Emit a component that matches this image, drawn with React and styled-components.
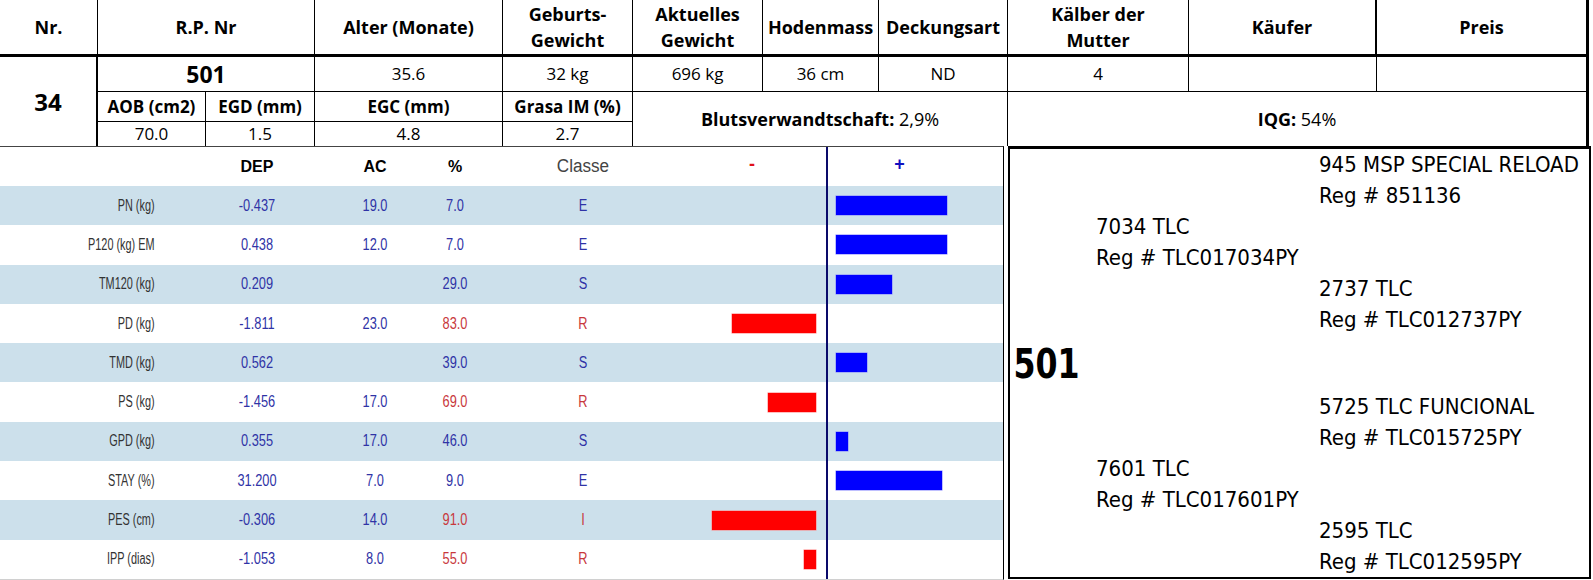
import React from "react"
import styled, { createGlobalStyle } from "styled-components"

const GlobalStyle = createGlobalStyle`
  html, body {
    margin: 0;
    padding: 0;
    background: #fff;
  }
  * {
    box-sizing: border-box;
  }
`

const Page = styled.div`
  width: 1593px;
  height: 580px;
  overflow: hidden;
  background: #fff;
`

// top summary table

const TopGrid = styled.div`
  display: grid;
  width: 1589px;
  grid-template-columns: 98px 108px 109px 188px 130px 130px 116px 129px 181px 188px 1fr;
  grid-template-rows: 57px 35px 30px 24px;
  border-right: 3px solid #000;
  font-family: "Open Sans", "Noto Sans", sans-serif;
  color: #000;
`

const Cell = styled.div`
  grid-column: ${({ $col }) => $col};
  grid-row: ${({ $row }) => $row};
  display: flex;
  flex-direction: column;
  align-items: center;
  justify-content: center;
  text-align: center;
  font-size: ${({ $size }) => $size || 17}px;
  font-weight: ${({ $bold }) => ($bold ? 700 : 400)};
  line-height: ${({ $lh }) => $lh || 26}px;
  border-right: ${({ $right }) => ($right === undefined ? 1 : $right)}px solid #000;
  border-bottom: ${({ $bottom }) => ($bottom === undefined ? 1 : $bottom)}px solid #000;
  overflow: hidden;
  white-space: nowrap;

  b {
    font-weight: 700;
  }
`

const HeadCell = styled(Cell).attrs({ $bold: true, $bottom: 3, $size: 18 })``

// bottom area

const Lower = styled.div`
  display: flex;
  height: 434px;
`

const Chart = styled.div`
  width: 1004px;
  border-top: 1px solid #444;
  border-right: 1px solid #000;
  border-bottom: 1px solid #d0d0d0;
  font-family: "Liberation Sans", Arial, sans-serif;
  position: relative;
`

const ChartRow = styled.div`
  display: grid;
  grid-template-columns: 160px 194px 42px 118px 138px 174px 2px 1fr;
  align-items: center;
  height: ${({ $head }) => ($head ? 39 : 39.3)}px;
  background: ${({ $shade }) => ($shade ? "#cce0eb" : "#fff")};
`

const Txt = styled.span`
  display: block;
  font-size: 16px;
  font-weight: 400;
  color: ${({ $tone }) =>
    $tone === "red" ? "#c8383c" : $tone === "blue" ? "#2f33a6" : "#333"};
  text-align: ${({ $align }) => $align || "center"};
  padding-right: ${({ $align }) => ($align === "right" ? 8 : 0)}px;
  transform: scaleX(${({ $align }) => ($align === "right" ? 0.68 : 0.8)});
  transform-origin: ${({ $align }) => ($align === "right" ? "right" : "center")} center;
  white-space: nowrap;
`

const HeadTxt = styled.span`
  display: block;
  text-align: center;
  font-size: ${({ $light }) => ($light ? 18 : 16)}px;
  font-weight: ${({ $light }) => ($light ? 400 : 700)};
  color: ${({ $light }) => ($light ? "#444" : "#000")};
  transform: scaleX(${({ $light }) => ($light ? 0.95 : 1)});
  white-space: nowrap;
`

const Sign = styled.span`
  display: block;
  text-align: center;
  font-family: "Liberation Sans", Arial, sans-serif;
  font-weight: 700;
  font-size: 18px;
  color: ${({ $plus }) => ($plus ? "#1010c0" : "#e0101a")};
  padding-left: ${({ $plus }) => ($plus ? 0 : 26)}px;
  padding-right: ${({ $plus }) => ($plus ? 32 : 0)}px;
  margin-top: -4px;
`

const Axis = styled.div`
  position: absolute;
  top: 0;
  bottom: 0;
  left: 826px;
  width: 2px;
  background: #0a0a6a;
`

const NegSide = styled.div`
  display: flex;
  justify-content: flex-end;
  padding-right: 10px;
`

const PosSide = styled.div`
  display: flex;
  padding-left: 8px;
`

const Bar = styled.div`
  height: 19px;
  background: ${({ $neg }) => ($neg ? "#ff0000" : "#0000ff")};
  box-shadow: 0 0 0 0.5px ${({ $neg }) => ($neg ? "#ff8080" : "#8080ff")};
`

// pedigree box

const Pedigree = styled.div`
  flex: 1;
  margin-left: 4px;
  margin-right: 2px;
  height: 433px;
  border-top: 3px solid #000;
  border-left: 2px solid #000;
  border-right: 2px solid #000;
  border-bottom: 2px solid #000;
  display: grid;
  grid-template-columns: 86px 223px 1fr;
  grid-template-rows: 62px 62px 62px 1fr 62px 62px 62px;
  font-family: "DejaVu Sans Condensed", "DejaVu Sans", sans-serif;
  font-stretch: condensed;
  font-size: 22px;
  line-height: 31px;
  color: #000;
  overflow: hidden;
`

const Animal = styled.div`
  grid-column: ${({ $gen }) => $gen};
  grid-row: ${({ $row }) => $row};
  white-space: nowrap;
`

const Subject = styled.div`
  grid-column: 1 / span 2;
  grid-row: 4;
  display: flex;
  align-items: center;
  padding-left: 4px;
  padding-top: 2px;
  font-family: "DejaVu Sans", sans-serif;
  font-weight: 700;
  font-size: 40px;
  transform: scaleX(0.88);
  transform-origin: left center;
`

const traits = [
  { name: "PN (kg)", dep: "-0.437", ac: "19.0", pct: "7.0", cls: "E", bar: 111 },
  { name: "P120 (kg) EM", dep: "0.438", ac: "12.0", pct: "7.0", cls: "E", bar: 111 },
  { name: "TM120 (kg)", dep: "0.209", ac: "", pct: "29.0", cls: "S", bar: 56 },
  { name: "PD (kg)", dep: "-1.811", ac: "23.0", pct: "83.0", cls: "R", bar: -84 },
  { name: "TMD (kg)", dep: "0.562", ac: "", pct: "39.0", cls: "S", bar: 31 },
  { name: "PS (kg)", dep: "-1.456", ac: "17.0", pct: "69.0", cls: "R", bar: -48 },
  { name: "GPD (kg)", dep: "0.355", ac: "17.0", pct: "46.0", cls: "S", bar: 12 },
  { name: "STAY (%)", dep: "31.200", ac: "7.0", pct: "9.0", cls: "E", bar: 106 },
  { name: "PES (cm)", dep: "-0.306", ac: "14.0", pct: "91.0", cls: "I", bar: -104 },
  { name: "IPP (dias)", dep: "-1.053", ac: "8.0", pct: "55.0", cls: "R", bar: -12 },
]

const ancestors = [
  { gen: 3, row: 1, name: "945 MSP SPECIAL RELOAD", reg: "851136" },
  { gen: 2, row: 2, name: "7034 TLC", reg: "TLC017034PY" },
  { gen: 3, row: 3, name: "2737 TLC", reg: "TLC012737PY" },
  { gen: 3, row: 5, name: "5725 TLC FUNCIONAL", reg: "TLC015725PY" },
  { gen: 2, row: 6, name: "7601 TLC", reg: "TLC017601PY" },
  { gen: 3, row: 7, name: "2595 TLC", reg: "TLC012595PY" },
]

export default function App() {
  return (
    <Page>
      <GlobalStyle />
      <TopGrid>
        <HeadCell $col="1" $row="1">Nr.</HeadCell>
        <HeadCell $col="2 / span 2" $row="1">R.P. Nr</HeadCell>
        <HeadCell $col="4" $row="1">Alter (Monate)</HeadCell>
        <HeadCell $col="5" $row="1">
          <span>Geburts-</span>
          <span>Gewicht</span>
        </HeadCell>
        <HeadCell $col="6" $row="1">
          <span>Aktuelles</span>
          <span>Gewicht</span>
        </HeadCell>
        <HeadCell $col="7" $row="1">Hodenmass</HeadCell>
        <HeadCell $col="8" $row="1">Deckungsart</HeadCell>
        <HeadCell $col="9" $row="1">
          <span>Kälber der</span>
          <span>Mutter</span>
        </HeadCell>
        <HeadCell $col="10" $row="1" $right={2}>Käufer</HeadCell>
        <HeadCell $col="11" $row="1" $right={0}>Preis</HeadCell>

        <Cell $col="1" $row="2 / span 3" $bold $size={24} $right={2} $bottom={0}>34</Cell>
        <Cell $col="2 / span 2" $row="2" $bold $size={23}>501</Cell>
        <Cell $col="4" $row="2">35.6</Cell>
        <Cell $col="5" $row="2">32 kg</Cell>
        <Cell $col="6" $row="2">696 kg</Cell>
        <Cell $col="7" $row="2">36 cm</Cell>
        <Cell $col="8" $row="2">ND</Cell>
        <Cell $col="9" $row="2">4</Cell>
        <Cell $col="10" $row="2"></Cell>
        <Cell $col="11" $row="2" $right={0}></Cell>

        <Cell $col="2" $row="3" $bold>AOB (cm2)</Cell>
        <Cell $col="3" $row="3" $bold>EGD (mm)</Cell>
        <Cell $col="4" $row="3" $bold>EGC (mm)</Cell>
        <Cell $col="5" $row="3" $bold>Grasa IM (%)</Cell>
        <Cell $col="6 / span 3" $row="3 / span 2" $size={18} $bottom={0}>
          <span>
            <b>Blutsverwandtschaft:</b> 2,9%
          </span>
        </Cell>
        <Cell $col="9 / span 3" $row="3 / span 2" $size={18} $right={0} $bottom={0}>
          <span>
            <b>IQG:</b> 54%
          </span>
        </Cell>

        <Cell $col="2" $row="4" $bottom={0}>70.0</Cell>
        <Cell $col="3" $row="4" $bottom={0}>1.5</Cell>
        <Cell $col="4" $row="4" $bottom={0}>4.8</Cell>
        <Cell $col="5" $row="4" $bottom={0}>2.7</Cell>
      </TopGrid>

      <Lower>
        <Chart>
          <ChartRow $head>
            <span />
            <HeadTxt>DEP</HeadTxt>
            <HeadTxt>AC</HeadTxt>
            <HeadTxt>%</HeadTxt>
            <HeadTxt $light>Classe</HeadTxt>
            <Sign>-</Sign>
            <span />
            <Sign $plus>+</Sign>
          </ChartRow>
          {traits.map((t, i) => {
            const bad = parseFloat(t.pct) > 50
            return (
              <ChartRow key={t.name} $shade={i % 2 === 0}>
                <Txt $align="right">{t.name}</Txt>
                <Txt $tone="blue">{t.dep}</Txt>
                <Txt $tone="blue">{t.ac}</Txt>
                <Txt $tone={bad ? "red" : "blue"}>{t.pct}</Txt>
                <Txt $tone={bad ? "red" : "blue"}>{t.cls}</Txt>
                <NegSide>{t.bar < 0 && <Bar $neg style={{ width: -t.bar }} />}</NegSide>
                <span />
                <PosSide>{t.bar > 0 && <Bar style={{ width: t.bar }} />}</PosSide>
              </ChartRow>
            )
          })}
          <Axis />
        </Chart>

        <Pedigree>
          {ancestors.map(a => (
            <Animal key={a.name} $gen={a.gen} $row={a.row}>
              <div>{a.name}</div>
              <div>Reg # {a.reg}</div>
            </Animal>
          ))}
          <Subject>501</Subject>
        </Pedigree>
      </Lower>
    </Page>
  )
}
